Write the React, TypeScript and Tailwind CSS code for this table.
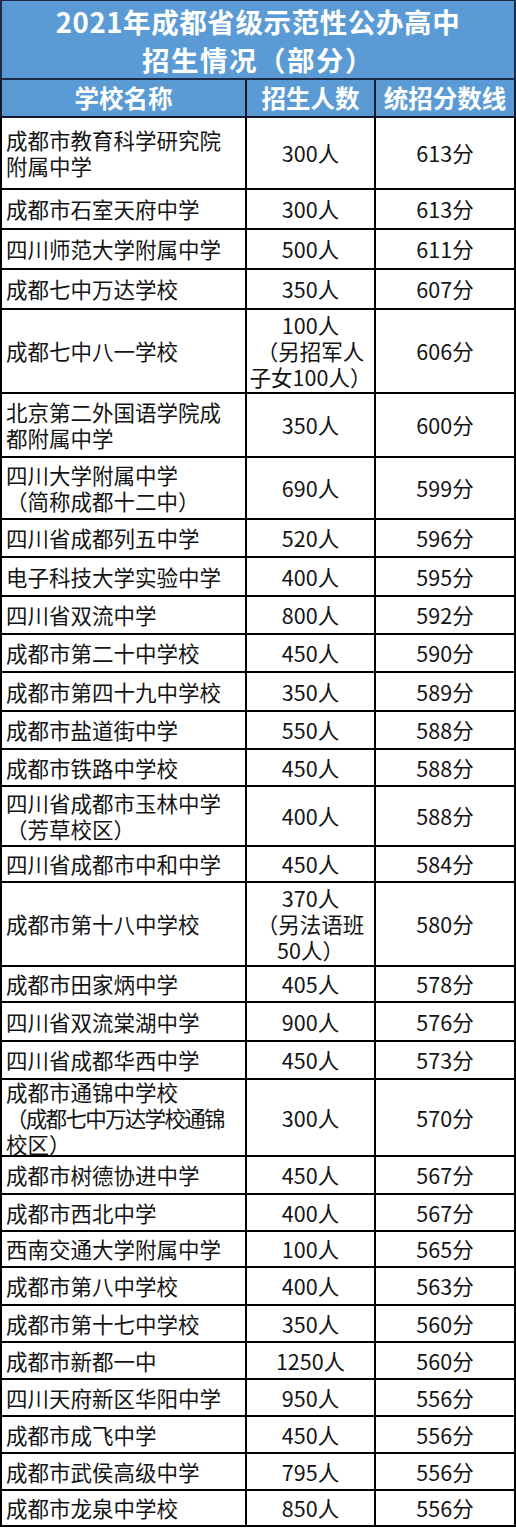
import React from "react";

type Row = { name: string[]; num: string[]; score: string; h: string };

const rows: Row[] = [
  { name: ["成都市教育科学研究院", "附属中学"], num: ["300人"], score: "613分", h: "h-[72px]" },
  { name: ["成都市石室天府中学"], num: ["300人"], score: "613分", h: "h-[40px]" },
  { name: ["四川师范大学附属中学"], num: ["500人"], score: "611分", h: "h-[40px]" },
  { name: ["成都七中万达学校"], num: ["350人"], score: "607分", h: "h-[40px]" },
  { name: ["成都七中八一学校"], num: ["100人", "（另招军人", "子女100人）"], score: "606分", h: "h-[84px]" },
  { name: ["北京第二外国语学院成", "都附属中学"], num: ["350人"], score: "600分", h: "h-[64px]" },
  { name: ["四川大学附属中学", "（简称成都十二中）"], num: ["690人"], score: "599分", h: "h-[62px]" },
  { name: ["四川省成都列五中学"], num: ["520人"], score: "596分", h: "h-[38px]" },
  { name: ["电子科技大学实验中学"], num: ["400人"], score: "595分", h: "h-[39px]" },
  { name: ["四川省双流中学"], num: ["800人"], score: "592分", h: "h-[38px]" },
  { name: ["成都市第二十中学校"], num: ["450人"], score: "590分", h: "h-[38px]" },
  { name: ["成都市第四十九中学校"], num: ["350人"], score: "589分", h: "h-[39px]" },
  { name: ["成都市盐道街中学"], num: ["550人"], score: "588分", h: "h-[38px]" },
  { name: ["成都市铁路中学校"], num: ["450人"], score: "588分", h: "h-[37px]" },
  { name: ["四川省成都市玉林中学", "（芳草校区）"], num: ["400人"], score: "588分", h: "h-[60px]" },
  { name: ["四川省成都市中和中学"], num: ["450人"], score: "584分", h: "h-[36px]" },
  { name: ["成都市第十八中学校"], num: ["370人", "（另法语班", "50人）"], score: "580分", h: "h-[84px]" },
  { name: ["成都市田家炳中学"], num: ["405人"], score: "578分", h: "h-[36px]" },
  { name: ["四川省双流棠湖中学"], num: ["900人"], score: "576分", h: "h-[39px]" },
  { name: ["四川省成都华西中学"], num: ["450人"], score: "573分", h: "h-[38px]" },
  { name: ["成都市通锦中学校", "（成都七中万达学校通锦", "校区）"], num: ["300人"], score: "570分", h: "h-[77px]" },
  { name: ["成都市树德协进中学"], num: ["450人"], score: "567分", h: "h-[38px]" },
  { name: ["成都市西北中学"], num: ["400人"], score: "567分", h: "h-[37px]" },
  { name: ["西南交通大学附属中学"], num: ["100人"], score: "565分", h: "h-[36px]" },
  { name: ["成都市第八中学校"], num: ["400人"], score: "563分", h: "h-[38px]" },
  { name: ["成都市第十七中学校"], num: ["350人"], score: "560分", h: "h-[37px]" },
  { name: ["成都市新都一中"], num: ["1250人"], score: "560分", h: "h-[37px]" },
  { name: ["四川天府新区华阳中学"], num: ["950人"], score: "556分", h: "h-[37px]" },
  { name: ["成都市成飞中学"], num: ["450人"], score: "556分", h: "h-[37px]" },
  { name: ["成都市武侯高级中学"], num: ["795人"], score: "556分", h: "h-[37px]" },
  { name: ["成都市龙泉中学校"], num: ["850人"], score: "556分", h: "h-[36px]" },
];

function Lines({ lines, tight }: { lines: string[]; tight?: boolean }) {
  return (
    <div>
      {lines.map((t, j) => (
        <React.Fragment key={j}>
          {j > 0 && <br />}
          <span className={tight && t.length > 10 ? "tracking-[-1.7px]" : ""}>{t}</span>
        </React.Fragment>
      ))}
    </div>
  );
}

export default function App() {
  return (
    <div className="w-[516px] h-[1529px] bg-white overflow-hidden font-['Noto_Sans_CJK_SC',sans-serif] text-[#141414]">
      <div className="h-[80px] bg-[#5b9bd5] border-t border-l-2 border-r-2 border-b-2 border-[#1d2b45] flex flex-col items-center justify-center text-white font-bold text-[27.5px] leading-[38px] tracking-[0.6px]">
        <div>2021年成都省级示范性公办高中</div>
        <div className="tracking-[1.5px]">招生情况（部分）</div>
      </div>
      <div className="h-[38px] flex bg-[#5b9bd5] border-l-2 border-r-2 border-b-2 border-[#111827] text-white font-bold text-[24.5px] leading-none">
        <div className="w-[245px] border-r-2 border-[#111827] flex items-center justify-center">学校名称</div>
        <div className="w-[129px] border-r-2 border-[#111827] flex items-center justify-center">招生人数</div>
        <div className="flex-1 flex items-center justify-center">统招分数线</div>
      </div>
      {rows.map((r, i) => (
        <div key={i} className={`${r.h} flex border-l-2 border-r-2 border-b-2 border-black text-[21.5px] leading-[26px]`}>
          <div className="w-[245px] border-r-2 border-black flex flex-col justify-center pl-[4px] whitespace-nowrap">
            <Lines lines={r.name} tight />
          </div>
          <div className="w-[129px] border-r-2 border-black flex flex-col justify-center items-center text-center whitespace-nowrap">
            <Lines lines={r.num} />
          </div>
          <div className="flex-1 flex items-center justify-center">{r.score}</div>
        </div>
      ))}
    </div>
  );
}
